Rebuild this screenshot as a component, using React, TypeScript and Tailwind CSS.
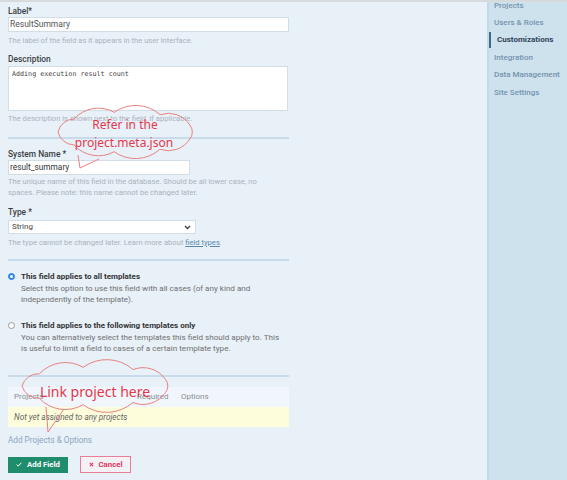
import React from "react";

function cloudPath(cx: number, cy: number, rx: number, ry: number, n: number, rot = 0, f = 0.62): string {
  const pts: [number, number][] = [];
  for (let i = 0; i < n; i++) {
    const t = rot + (i / n) * Math.PI * 2;
    pts.push([cx + rx * Math.cos(t), cy + ry * Math.sin(t)]);
  }
  let d = `M ${pts[0][0].toFixed(1)} ${pts[0][1].toFixed(1)}`;
  for (let i = 0; i < n; i++) {
    const a = pts[i];
    const b = pts[(i + 1) % n];
    const dist = Math.hypot(b[0] - a[0], b[1] - a[1]);
    const r = dist * f;
    d += ` A ${r.toFixed(1)} ${r.toFixed(1)} 0 0 1 ${b[0].toFixed(1)} ${b[1].toFixed(1)}`;
  }
  return d + " Z";
}

const font = { fontFamily: "Roboto, 'Liberation Sans', sans-serif" };

function Label({ children }: { children: React.ReactNode }) {
  return <div className="h-[10px] text-[8.4px] leading-[10px] font-medium text-[#3a3f44]">{children}</div>;
}

function Help({ children, className = "" }: { children: React.ReactNode; className?: string }) {
  return <div className={`text-[7.6px] leading-[11px] text-[#abb3ba] ${className}`}>{children}</div>;
}

function Divider({ className = "" }: { className?: string }) {
  return <div className={`h-[2px] bg-[#c8dbea] ${className}`} />;
}

export default function App() {
  return (
    <div className="relative flex h-[480px] w-[567px] overflow-hidden border-t-2 border-[#d6dadd] bg-[#e8f0f8]" style={font}>
      {/* Main */}
      <div className="w-[487px] shrink-0 pl-2">
        <div className="w-[281px]">
          <div className="mt-[4px]">
            <Label>Label*</Label>
          </div>
          <div className="mt-[1px] flex h-[15px] items-center border border-[#d3dde6] bg-white pl-[1px] text-[8.5px] text-[#555]">
            ResultSummary
          </div>
          <Help className="mt-[3px]">The label of the field as it appears in the user interface.</Help>

          <div className="mt-[8px]">
            <Label>Description</Label>
          </div>
          <div className="mt-[2px] h-[45px] w-[280px] border border-[#d3dde6] bg-white pl-[3px] pt-[2px] text-[6.7px] leading-[10px] text-[#444]" style={{ fontFamily: "'DejaVu Sans Mono', 'Liberation Mono', monospace" }}>
            Adding execution result count
          </div>
          <Help className="mt-[2px]">The description is shown next to the field, if applicable.</Help>
          <Divider className="mt-[13px]" />

          <div className="mt-[10px]">
            <Label>System Name *</Label>
          </div>
          <div className="mt-[1px] flex h-[15px] w-[182px] items-center border border-[#d3dde6] bg-white pl-[1px] text-[8.3px] text-[#333]">
            result_summary
          </div>
          <Help className="mt-[1px]">
            <div>The unique name of this field in the database. Should be all lower case, no</div>
            <div>spaces. Please note: this name cannot be changed later.</div>
          </Help>

          <div className="mt-[9px]">
            <Label>Type *</Label>
          </div>
          <div className="mt-[3px] flex h-[14px] w-[188px] items-center justify-between border border-[#d3dde6] bg-white pl-[3px] pr-[4px] text-[8px] text-[#444]">
            <span>String</span>
            <svg width="7" height="5" viewBox="0 0 7 5">
              <path d="M1 1 L3.5 3.5 L6 1" fill="none" stroke="#444" strokeWidth="1.4" />
            </svg>
          </div>
          <Help className="mt-[3px]">
            The type cannot be changed later. Learn more about{" "}
            <span className="text-[#5a88b0] underline">field types</span>.
          </Help>
          <Divider className="mt-[11px]" />

          {/* Radios */}
          <div className="mt-[11px] flex items-start">
            <div className="mt-[1px] flex h-[7px] w-[7px] items-center justify-center rounded-full border border-[#2e86e8] bg-[#2e86e8]">
              <div className="h-[3px] w-[3px] rounded-full bg-white" />
            </div>
            <div className="ml-[6px]">
              <div className="text-[8px] leading-[10px] font-bold text-[#333]">This field applies to all templates</div>
              <div className="mt-[1px] text-[8.1px] leading-[11px] text-[#707070]">
                <div>Select this option to use this field with all cases (of any kind and</div>
                <div>independently of the template).</div>
              </div>
            </div>
          </div>
          <div className="mt-[16px] flex items-start">
            <div className="mt-[1px] h-[7px] w-[7px] rounded-full border border-[#9a9a9a] bg-white" />
            <div className="ml-[6px]">
              <div className="text-[8px] leading-[10px] font-bold text-[#333]">This field applies to the following templates only</div>
              <div className="mt-[1px] text-[8.1px] leading-[11px] text-[#707070]">
                <div>You can alternatively select the templates this field should apply to. This</div>
                <div>is useful to limit a field to cases of a certain template type.</div>
              </div>
            </div>
          </div>
          <Divider className="mt-[21px]" />

          {/* Table */}
          <div className="mt-[10px] flex h-[20px] items-center bg-[#f1f6fc] text-[8px] text-[#8a8f94]">
            <span className="ml-[6px] w-[123px]">Projects</span>
            <span className="w-[44px]">Required</span>
            <span>Options</span>
          </div>
          <div className="flex h-[20px] items-center bg-[#fdfddc] pl-[6px] text-[8.2px] italic text-[#666]">
            Not yet assigned to any projects
          </div>
          <div className="mt-[8px] text-[8.2px] leading-[10px] text-[#8aa6c0]">Add Projects &amp; Options</div>

          <div className="mt-[11px] flex items-center">
            <div className="flex h-[16px] w-[60px] items-center justify-center gap-[5px] bg-[#1f8c6c] text-[7.8px] font-bold text-white">
              <svg width="6" height="5" viewBox="0 0 6 5">
                <path d="M0.6 2.6 L2.2 4.1 L5.4 0.8" fill="none" stroke="#fff" strokeWidth="1" />
              </svg>
              <span>Add Field</span>
            </div>
            <div className="ml-[12px] flex h-[17px] w-[51px] items-center justify-center gap-[5px] border border-[#e77f98] bg-[#f4f1f5] text-[7.8px] font-bold text-[#e2355c]">
              <svg width="5" height="5" viewBox="0 0 5 5">
                <path d="M0.8 0.8 L4.2 4.2 M4.2 0.8 L0.8 4.2" stroke="#e2355c" strokeWidth="1.1" />
              </svg>
              <span>Cancel</span>
            </div>
          </div>
        </div>
      </div>

      {/* Sidebar */}
      <div className="flex-1 border-l-2 border-[#c3dae7] bg-[#cee2ed]">
        <div className="-mt-[5px] flex flex-col text-[8px] font-medium text-[#7493ad]">
          <div className="flex h-[17.4px] items-center pl-[5px]">Projects</div>
          <div className="flex h-[17.4px] items-center pl-[5px]">Users &amp; Roles</div>
          <div className="flex h-[17.4px] items-center">
            <div className="h-[16px] w-[2px] bg-[#3d6888]" />
            <span className="ml-[6px] font-bold text-[#2f4558]">Customizations</span>
          </div>
          <div className="flex h-[17.4px] items-center pl-[5px]">Integration</div>
          <div className="flex h-[17.4px] items-center pl-[5px]">Data Management</div>
          <div className="flex h-[17.4px] items-center pl-[5px]">Site Settings</div>
        </div>
      </div>

      {/* Callout annotations */}
      <svg className="pointer-events-none absolute left-0 -top-[2px]" width="567" height="480" viewBox="0 0 567 480">
        <g fill="none" stroke="#e98282" strokeWidth="1">
          <path d={cloudPath(126, 132, 68, 20, 9, 0.35, 0.8)} />
          <path d="M78 155 L80 168 L99 159" />
          <path d={cloudPath(96, 386, 74, 19, 9, 0.35, 0.8)} />
          <path d="M46 407 L48 432 L64 409" />
        </g>
        <g fill="#e5374c" style={{ fontFamily: "'Noto Sans', 'Open Sans', sans-serif" }}>
          <text x="125" y="129" fontSize="12" textAnchor="middle">Refer in the</text>
          <text x="124" y="147" fontSize="12" textAnchor="middle">project.meta.json</text>
          <text x="95" y="397" fontSize="14" textAnchor="middle">Link project here</text>
        </g>
      </svg>
    </div>
  );
}
